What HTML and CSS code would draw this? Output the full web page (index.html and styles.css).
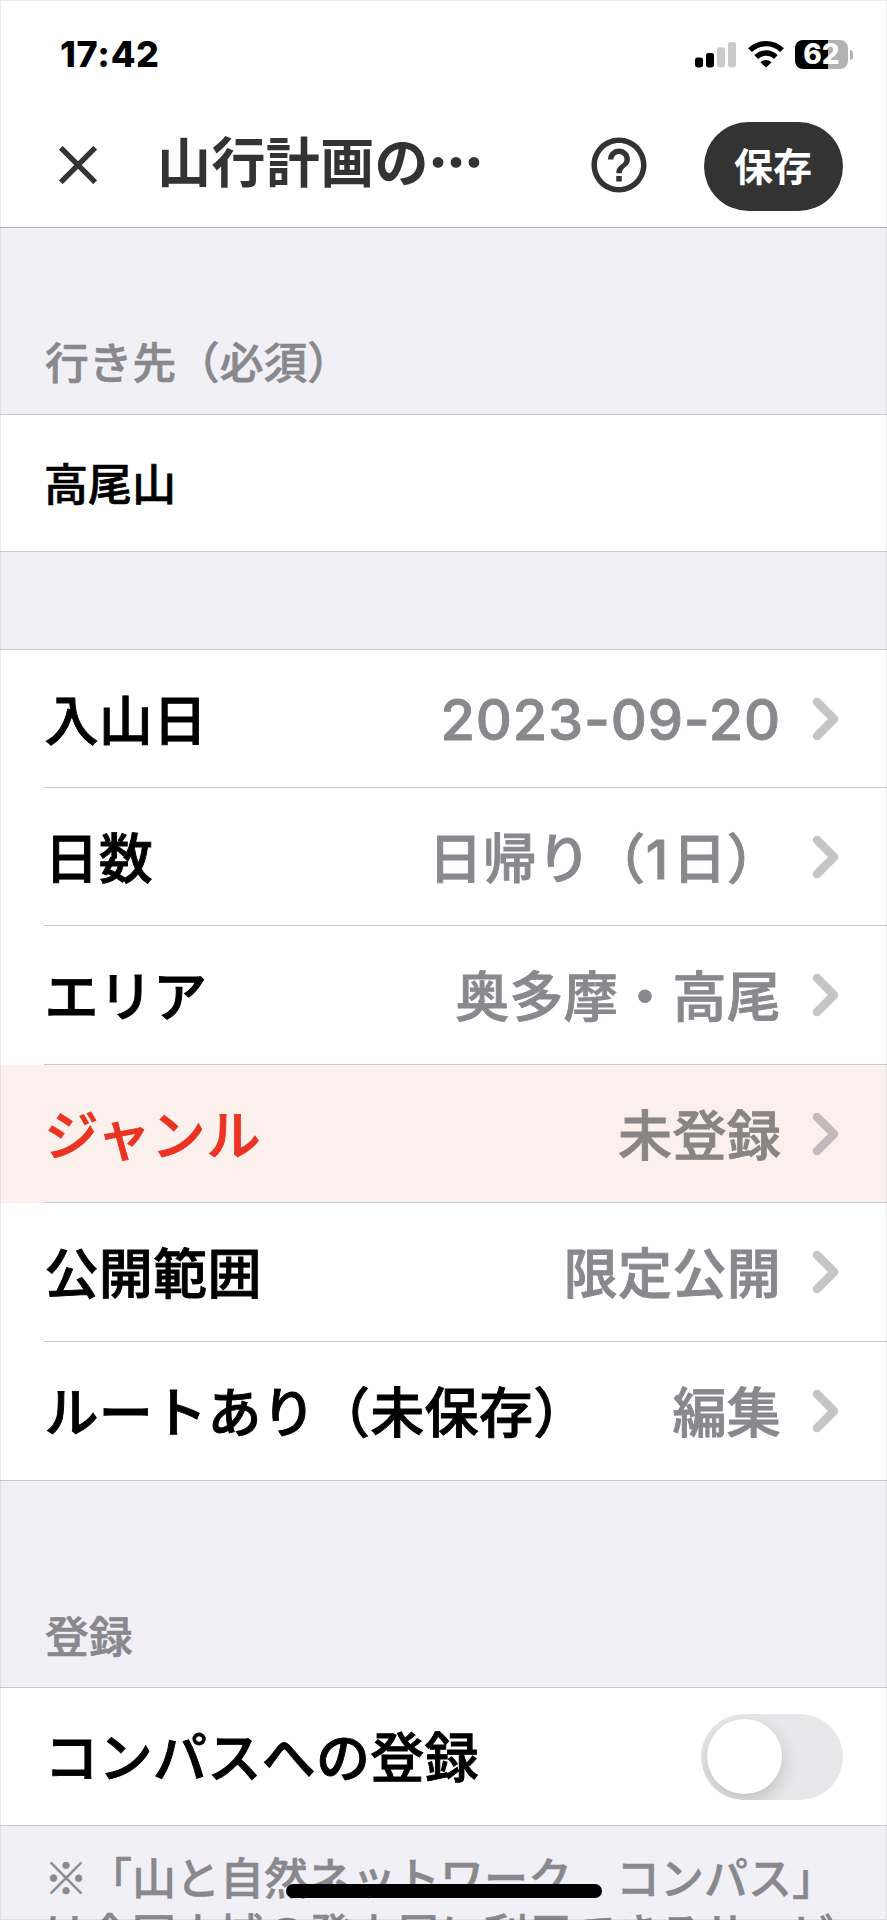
FILE: index.html
```html
<!DOCTYPE html>
<html lang="ja">
<head>
  <meta charset="UTF-8">
  <meta name="viewport" content="width=device-width, initial-scale=1.0">
  <title>山行計画の作成</title>
  <link rel="stylesheet" href="styles.css">
</head>
<body>
  <div class="screen">

    <header>
      <div class="status-bar">
        <span class="time">17:42</span>
        <div class="status-icons">
          <svg class="signal" width="42" height="30" viewBox="0 0 42 30">
            <rect x="0" y="17.5" width="8" height="10" rx="2.4" fill="#000"/>
            <rect x="11" y="13" width="8" height="14.5" rx="2.4" fill="#000"/>
            <rect x="22" y="7.3" width="8" height="20.2" rx="2.4" fill="#cbcbcb"/>
            <rect x="33" y="2" width="8" height="25.5" rx="2.4" fill="#cbcbcb"/>
          </svg>
          <svg class="wifi" width="36" height="30" viewBox="0 0 36 30">
            <g fill="none" stroke="#000" stroke-width="5.4">
              <path d="M2 10.2a22.8 22.8 0 0 1 32 0"/>
              <path d="M8.2 17.1a13.9 13.9 0 0 1 19.6 0"/>
            </g>
            <path d="M18 27.6l-5.6-5.3a8 8 0 0 1 11.2 0z" fill="#000"/>
          </svg>
          <div class="battery">
            <span>62</span>
          </div>
          <div class="battery-tip"></div>
        </div>
      </div>

      <nav>
        <svg class="close" width="38" height="38" viewBox="0 0 38 38">
          <path d="M1.8 1.8L36.2 36.2M36.2 1.8L1.8 36.2" stroke="#333" stroke-width="5.4"/>
        </svg>
        <h1>山行計画の<span class="dots">…</span></h1>
        <svg class="help" width="66" height="66" viewBox="0 0 24 24">
          <path fill="#333" d="M11 18h2v-2h-2v2zm1-16C6.48 2 2 6.48 2 12s4.48 10 10 10 10-4.480 10-10S17.520 2 12 2zm0 18c-4.410 0-8-3.590-8-8s3.590-8 8-8 8 3.590 8 8-3.590 8-8 8zm0-14c-2.210 0-4 1.790-4 4h2c0-1.100.9-2 2-2s2 .9 2 2c0 2-3 1.750-3 5h2c0-2.250 3-2.500 3-5 0-2.210-1.790-4-4-4z"/>
        </svg>
        <button class="save">保存</button>
      </nav>
    </header>

    <main>
      <h2 class="label-first">行き先（必須）</h2>
      <section class="group">
        <div class="field">高尾山</div>
      </section>

      <section class="group plan">
        <div class="row">
          <span class="name">入山日</span>
          <span class="value date">2023-09-20</span>
          <svg class="chevron" viewBox="0 0 27 44"><path d="M5 5l17 17L5 39"/></svg>
        </div>
        <div class="row">
          <span class="name">日数</span>
          <span class="value">日帰り（<span class="num">1</span>日）</span>
          <svg class="chevron" viewBox="0 0 27 44"><path d="M5 5l17 17L5 39"/></svg>
        </div>
        <div class="row">
          <span class="name">エリア</span>
          <span class="value">奥多摩・高尾</span>
          <svg class="chevron" viewBox="0 0 27 44"><path d="M5 5l17 17L5 39"/></svg>
        </div>
        <div class="row alert">
          <span class="name genre">ジャンル</span>
          <span class="value">未登録</span>
          <svg class="chevron" viewBox="0 0 27 44"><path d="M5 5l17 17L5 39"/></svg>
        </div>
        <div class="row">
          <span class="name">公開範囲</span>
          <span class="value">限定公開</span>
          <svg class="chevron" viewBox="0 0 27 44"><path d="M5 5l17 17L5 39"/></svg>
        </div>
        <div class="row">
          <span class="name">ルートあり（未保存）</span>
          <span class="value">編集</span>
          <svg class="chevron" viewBox="0 0 27 44"><path d="M5 5l17 17L5 39"/></svg>
        </div>
      </section>

      <h2 class="label-register">登録</h2>
      <section class="group">
        <div class="row compass">
          <span class="name">コンパスへの登録</span>
          <div class="toggle"><div class="knob"></div></div>
        </div>
      </section>

      <p class="note">※「山と自然ネットワーク　コンパス」<br>は全国山域の登山届に利用できるサービ</p>
    </main>

    <div class="home-bar"></div>
  </div>
</body>
</html>
```

FILE: styles.css
```css
:root {
  --bg: #f1f0f6;
  --line: #c9c9cc;
  --gray: #89888d;
  --dark: #333;
  --red: #eb3323;
}

* {
  box-sizing: border-box;
  margin: 0;
  padding: 0;
}

body {
  font-family: Inter, "Noto Sans CJK JP", sans-serif;
  background: var(--bg);
  color: #000;
}

.screen {
  position: relative;
  width: 887px;
  height: 1920px;
  overflow: hidden;
  background: var(--bg);
}

/* thin frame around the whole screen */
.screen::after {
  content: "";
  position: absolute;
  inset: 0;
  border: 1px solid rgba(0, 0, 0, 0.08);
}

header {
  height: 228px;
  background: #fff;
  border-bottom: 1px solid #b5b5b9;
}

.status-bar {
  display: flex;
  justify-content: space-between;
  height: 110px;
  padding: 40px 34px 0 60px;
}

.time {
  font-size: 36px;
  line-height: 29px;
  font-weight: 800;
  letter-spacing: 0.7px;
}

.status-icons {
  display: flex;
  height: 29px;
}

.wifi {
  margin: 0 11px 0 11px;
}

.battery {
  width: 53px;
  height: 29px;
  border-radius: 8px;
  background: linear-gradient(to right, #000 33px, #b2b2b2 33px);
  color: #fff;
  font-size: 28px;
  line-height: 29px;
  font-weight: 800;
  text-align: center;
}

.battery-tip {
  width: 3px;
  height: 10px;
  margin: 10px 0 0 2px;
  border-radius: 0 5px 5px 0;
  background: #b2b2b2;
}

nav {
  display: flex;
  align-items: center;
  height: 110px;
  padding: 0 44px 0 59px;
}

h1 {
  width: 326px;
  margin-left: 60px;
  padding-bottom: 10px;
  font-family: "Noto Sans CJK JP", sans-serif;
  font-size: 54px;
  line-height: 80px;
  font-weight: 700;
  letter-spacing: 0.4px;
  color: var(--dark);
  white-space: nowrap;
}

.dots {
  -webkit-text-stroke: 2px;
}

.help {
  margin-left: 103px;
}

.save {
  width: 139px;
  height: 89px;
  margin: 2px 0 0 auto;
  padding: 0 1px 5px 0;
  border: none;
  border-radius: 45px;
  background: var(--dark);
  color: #fff;
  font: 700 39px "Noto Sans CJK JP", sans-serif;
}

h2 {
  padding-left: 45px;
  font-size: 43.7px;
  line-height: 60px;
  font-weight: 500;
  color: var(--gray);
  -webkit-text-stroke: 0.7px;
}

.label-first {
  height: 186px;
  padding-top: 106px;
}

.label-register {
  height: 206px;
  padding-top: 127px;
}

.group {
  background: #fff;
  border-top: 1px solid var(--line);
  border-bottom: 1px solid var(--line);
}

.field {
  height: 136px;
  padding-left: 44px;
  font-size: 44px;
  line-height: 140px;
  font-weight: 500;
  -webkit-text-stroke: 0.7px;
}

.plan {
  margin-top: 97px;
}

.row {
  display: flex;
  align-items: center;
  height: 138.5px;
  padding: 0 48px 0 44.5px;
  background: linear-gradient(var(--line), var(--line)) 44px 100% / 100% 1px no-repeat;
  font-size: 54px;
  font-weight: 500;
}

.row:first-child {
  height: 137.6px;
}

.row:last-child {
  height: 138px;
  background: none;
}

.row.alert {
  background-color: #fbf0eb;
}

.name,
.value {
  padding-bottom: 3px;
  letter-spacing: 0.3px;
  white-space: nowrap;
  -webkit-text-stroke: 0.9px;
}

.alert .name {
  color: var(--red);
}

.name.genre {
  letter-spacing: 0.9px;
}

.value {
  margin-left: auto;
  margin-right: 31px;
  color: var(--gray);
}

.alert .value {
  color: #8a8585;
}

.date {
  padding: 2px 0 0;
  font-size: 56px;
  letter-spacing: 0.8px;
}

.num {
  margin: 0 4px 0 0;
}

.chevron {
  flex: none;
  width: 27px;
  height: 44px;
  fill: none;
  stroke: #c5c5c7;
  stroke-width: 8.5;
  stroke-linecap: round;
  stroke-linejoin: round;
}

.alert .chevron {
  stroke: #c5babb;
}

.row.compass {
  justify-content: space-between;
  height: 137px;
  padding-right: 44px;
}

.toggle {
  width: 142px;
  height: 86px;
  margin-top: 1px;
  padding: 5px 6px;
  border-radius: 43px;
  background: #e8e8ea;
  overflow: hidden;
}

.knob {
  width: 75px;
  height: 75px;
  border-radius: 50%;
  background: #fff;
  box-shadow: 0 7px 18px rgba(0, 0, 0, 0.18);
}

.note {
  padding: 22px 0 0 44px;
  font-family: "Noto Sans CJK JP", sans-serif;
  font-size: 44px;
  line-height: 56px;
  font-weight: 500;
  color: var(--gray);
  white-space: nowrap;
  -webkit-text-stroke: 0.5px;
}

.home-bar {
  position: absolute;
  left: 286px;
  top: 1884px;
  width: 316px;
  height: 14px;
  border-radius: 7px;
  background: #000;
}
```
